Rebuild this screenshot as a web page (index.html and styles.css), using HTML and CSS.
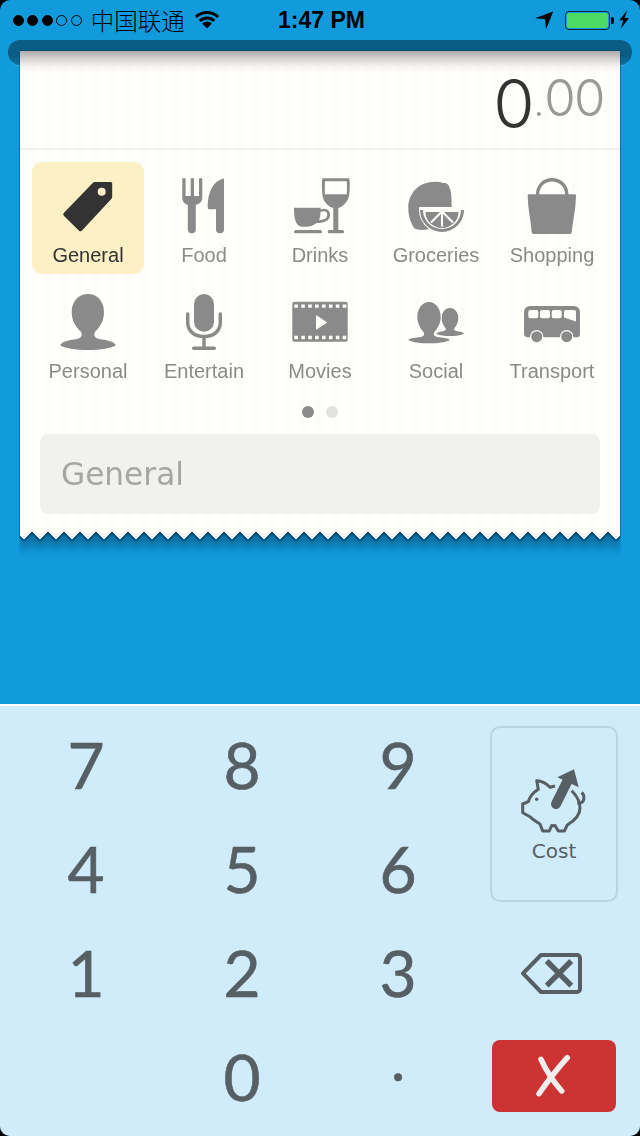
FILE: index.html
```html
<!DOCTYPE html>
<html lang="en">
<head>
<meta charset="utf-8">
<title>Expense entry</title>
<link rel="stylesheet" href="styles.css">
</head>
<body>
<div class="screen">
  <header class="status">
    <div class="signal"><i class="on"></i><i class="on"></i><i class="on"></i><i></i><i></i></div>
    <span class="carrier">中国联通</span>
    <svg class="wifi" viewBox="0 0 24 17.5"><path class="arc" d="M.9 6A16 16 0 0 1 23.100 6M4.700 9.950a10.500 10.500 0 0 1 14.600 0"/><path d="M12 17.500 7.200 12.500a7 7 0 0 1 9.600 0z"/></svg>
    <span class="time">1:47 PM</span>
    <svg class="loc" viewBox="0 0 18.300 18.300"><path d="M18.300.300 0 7.300l10 .7 1 10.300z"/></svg>
    <div class="battery"><div class="level"></div></div><div class="nub"></div>
    <svg class="bolt" viewBox="0 0 10.300 19.300"><path d="M8.300.300.300 10.300h4L1.600 19 10 8H5.600z"/></svg>
  </header>
  <div class="slot"></div>
  <div class="receipt-shadow">
    <main class="receipt">
      <div class="amount"><span class="int">0</span><span class="dot">.</span><span class="dec">00</span></div>
      <div class="cats">
        <div class="cat active">
          <svg viewBox="52 176 72 58"><path class="dark" d="M95 182h15.700a1.500 1.500 0 0 1 1.500 1.500V197a3 3 0 0 1-.9 2L82 230.500a2.200 2.200 0 0 1-3.200 0L64 216a2.200 2.200 0 0 1 0-3.200L92.500 183.200a3.500 3.500 0 0 1 2.500-1.200z"/><circle class="hole-yellow" cx="101.700" cy="191.700" r="4"/></svg>
          <span>General</span>
        </div>
        <div class="cat">
          <svg viewBox="168 176 72 58"><path d="M182.300 178.300h3.300V196h5.100v-17.700h3.300V196h5v-17.700h3.300V198q0 5-6.500 7v24.300a4 4 0 0 1-8 0V205q-5.500-2-5.500-7z"/><path d="M224 178.300v51a4 4 0 0 1-8 0v-20h-7q-1.300 0-1.300-2.300c0-15 5.300-26 16.300-28.700z"/></svg>
          <span>Food</span>
        </div>
        <div class="cat">
          <svg viewBox="284 176 72 58"><path fill-rule="evenodd" d="M294 207.700h26.700v1.900c6.300-2.600 9.300 1.400 9.300 5.400 0 5.500-5 8-13.500 8-3.500 3-6.500 3.700-10.500 3.700h-3c-7 0-9-6.700-9-19zm26.500 4.300c-.1 3-.5 6-1.500 8.300 5-.3 8.300-2.300 8.300-5.300 0-2-1.300-5-6.800-3z"/><path d="M295.700 230h24.600a1.650 1.650 0 0 1 0 3.300h-24.600a1.650 1.650 0 0 1 0-3.300z"/><path fill-rule="evenodd" d="M323.300 178.300h25q1 0 1.200 1c.5 4.700.5 10.700-.5 16.700-1.500 7-7 11-10.700 12v22h4.200a1.650 1.650 0 0 1 0 3.300h-13.100a1.650 1.650 0 0 1 0-3.300h3.900v-22c-4.300-1-9.500-5-10.700-12-.9-6-.7-12-.5-16.700q.2-1 1.200-1zm1.700 3c-.3 4.700-.2 8.700 0 13h21.700c.3-4.300.3-8.300.1-13z"/></svg>
          <span>Drinks</span>
        </div>
        <div class="cat">
          <svg viewBox="400 176 72 58"><path d="M435 181.700c3 0 6 .3 8.500 1.300 2.500-.5 5.500 1 5.800 4.500 1.700 2.500 2.400 8.500 2.400 19.500H419a25 25 0 0 0 10 22c-5 1.500-12 1-14.500-.5-4.500-6.500-6.200-13.500-6.200-20.500 0-15 10.700-26.300 26.700-26.300z"/><path d="M420 210h44a22 22 0 0 1-44 0z"/><path class="hole" d="M423 210h38a19 19 0 0 1-38 0z"/><path d="M425.500 212h33a16.500 16 0 0 1-33 0z"/><path class="spoke" d="M442 211.500v15M442 211.500l-11 11M442 211.500l11 11"/></svg>
          <span>Groceries</span>
        </div>
        <div class="cat">
          <svg viewBox="516 176 72 58"><path d="M529 194.300h45.700q1.300 0 1.300 1.300c0 12.400-3 24.400-4.300 36.400q0 2-2 2h-36q-2 0-2-2c-1-12-4-24-4-36.400q0-1.300 1.300-1.300z"/><path class="line" d="M537.500 195c0-9.500 6.500-15.200 14.500-15.200s14.800 5.700 14.800 15.200"/></svg>
          <span>Shopping</span>
        </div>
        <div class="cat">
          <svg viewBox="52 292 72 58"><path d="M88 294c10 0 16 8 16 18 0 9-4 15-9 20-2 3 0 6 4 7 7 1 14 2 17 6-4 3.500-16 5-28 5s-24-1.500-28-5c3-4 10-5 17-6 4-1 6-4 4-7-5-5-9.300-11-9.300-20 0-10 6.300-18 16.300-18z"/></svg>
          <span>Personal</span>
        </div>
        <div class="cat">
          <svg viewBox="168 292 72 58"><rect x="194" y="294" width="20" height="37.700" rx="10"/><path class="line" d="M187.700 314v8c0 9 6.300 14.500 16.300 14.500s16.300-5.500 16.300-14.500v-8"/><rect x="202.300" y="336" width="3.400" height="11"/><rect x="192" y="346.500" width="24" height="3.500" rx="1.750"/></svg>
          <span>Entertain</span>
        </div>
        <div class="cat">
          <svg viewBox="284 292 72 58"><path fill-rule="evenodd" d="M294.300 301.700h51.400a2 2 0 0 1 2 2v36a2 2 0 0 1-2 2h-51.400a2 2 0 0 1-2-2v-36a2 2 0 0 1 2-2zm0 2.700v3.400h3.600v-3.400zm7 0v3.400h3.600v-3.400zm6.900 0v3.400h3.600v-3.400zm6.900 0v3.400h3.600v-3.400zm6.900 0v3.400h3.600v-3.400zm6.900 0v3.400h3.600v-3.400zm6.900 0v3.400h3.600v-3.400zm6.900 0v3.400h3.600v-3.400zm-48.400 31.400v3.400h3.600v-3.400zm7 0v3.400h3.600v-3.400zm6.900 0v3.400h3.600v-3.400zm6.900 0v3.400h3.600v-3.400zm6.900 0v3.400h3.600v-3.400zm6.900 0v3.400h3.600v-3.400zm6.900 0v3.400h3.600v-3.400zm6.900 0v3.400h3.600v-3.400zM316 315v15l11.300-7.500z"/></svg>
          <span>Movies</span>
        </div>
        <div class="cat">
          <svg viewBox="400 292 72 58"><path d="M450 308c5 0 8.300 4.500 8.300 10 0 5-2.300 8-3.800 10-1 2 .5 2.800 2.500 3.200 3 .4 6 .8 7 2.300-3 2-9 2.500-14 2.500s-11-.5-14-2.500c2-1.500 5-1.900 7-2.300 2-.4 3.500-1.200 2.500-3.200-1.500-2-3.800-5-3.800-10 0-5.500 3.300-10 8.300-10z"/><path class="cutout" d="M429 302c7 0 11.700 7 11.700 15 0 7-3.700 12-6.200 15-1.500 2.500-.5 4 2.500 5 5 .5 11 1 13 3-4 2.500-13 3.300-21 3.300s-17-.8-20.700-3.300c2.200-2 7.700-2.500 12.700-3 3-1 4-2.500 2.500-5-2.500-3-6.200-8-6.200-15 0-8 4.700-15 11.700-15z"/></svg>
          <span>Social</span>
        </div>
        <div class="cat">
          <svg viewBox="516 292 72 58"><path fill-rule="evenodd" d="M530 306h44a6 6 0 0 1 6 6v22.300a3 3 0 0 1-3 3h-49a4 4 0 0 1-4-4V312a6 6 0 0 1 6-6zm.300 4a2 2 0 0 0-2 2v4.300a2 2 0 0 0 2 2h6a2 2 0 0 0 2-2V312a2 2 0 0 0-2-2zm11.700 0a2 2 0 0 0-2 2v4.300a2 2 0 0 0 2 2h6a2 2 0 0 0 2-2V312a2 2 0 0 0-2-2zm11.700 0a2 2 0 0 0-2 2v4.300a2 2 0 0 0 2 2h6a2 2 0 0 0 2-2V312a2 2 0 0 0-2-2zm12.300 0a2 2 0 0 0-2 2v5.500l12 4V312a2 2 0 0 0-2-2z"/><circle class="wheel" cx="536.700" cy="336.700" r="5.500"/><circle class="wheel" cx="566.700" cy="336.700" r="5.500"/></svg>
          <span>Transport</span>
        </div>
      </div>
      <div class="pager"><i class="current"></i><i></i></div>
      <div class="note">General</div>
    </main>
  </div>
  <section class="keypad">
    <button class="key">7</button>
    <button class="key">8</button>
    <button class="key">9</button>
    <div class="cost-cell">
      <button class="cost">
        <svg viewBox="520 766 68 68">
          <path class="pig" d="M555 786 550 787.300C547 784 542 781 536.700 780.700L538.300 789.300C534 792 530 796 528.300 801.700L522.700 804V812.700L530 816.700C533 820 537 822 540 824L542.700 831H549.300L551.700 825.500C553.500 825.800 554 825.800 555 825.500L558.300 831H564.300L567.300 825C574 821 580 816 580 808 580 801 576 795 571.700 790.700"/>
          <path class="pig" d="M577.300 803.300c3.500 0 6-1 6.500-4 .5-3-.5-5.500-2.100-7"/>
          <circle class="ink" cx="536.700" cy="799.300" r="1.700"/>
          <path class="ink" d="M574 769.300l4.700 18-21.400-10z"/>
          <path class="shaft" d="M567 782l-11 22"/>
        </svg>
        <span>Cost</span>
      </button>
    </div>
    <button class="key">4</button>
    <button class="key">5</button>
    <button class="key">6</button>
    <button class="key">1</button>
    <button class="key">2</button>
    <button class="key">3</button>
    <button class="key icon-key" aria-label="Backspace">
      <svg viewBox="519 948 70 48">
        <path class="pig wide" d="M541 954h36a3 3 0 0 1 3 3v31a3 3 0 0 1-3 3h-36l-18-18.700z"/>
        <path class="cross" d="M546.700 960l24.600 24.600M571.300 960l-24.600 24.600"/>
      </svg>
    </button>
    <span></span>
    <button class="key">0</button>
    <button class="key small-dot">.</button>
    <div class="clear-cell">
      <button class="clear" aria-label="Delete">
        <svg viewBox="534 1052 40 46"><path class="clear-x" d="M541 1058.300c5 11 13 23 20.700 31.700M567.300 1056.700c-9 10-20 24-28.300 36"/></svg>
      </button>
    </div>
  </section>
</div>
</body>
</html>
```
FILE: styles.css
```css
* { box-sizing: border-box; }
html, body { margin: 0; padding: 0; background: #000; }
.screen {
  width: 640px;
  height: 1136px;
  background: #119bdd;
  display: flex;
  flex-direction: column;
  overflow: hidden;
  border-radius: 10px;
  font-family: "Liberation Sans", Arial, sans-serif;
}
.status {
  height: 40px;
  flex: none;
  display: flex;
  align-items: center;
  padding: 0 0 0 13px;
  color: #000;
}
.signal { display: flex; gap: 3.4px; width: 68px; flex: none; }
.signal i { width: 11px; height: 11px; border-radius: 50%; border: 1px solid #000; flex: none; }
.signal i.on { background: #000; }
.carrier {
  font-family: "Noto Sans CJK SC", sans-serif;
  font-size: 23.5px;
  font-weight: 300;
  line-height: 40px;
  margin-left: 9.7px;
  width: 94px;
  white-space: nowrap;
}
.wifi { width: 24px; height: 17.5px; margin-left: 10.3px; flex: none; }
.wifi .arc { fill: none; stroke: #000; stroke-width: 3; }
.time {
  font-size: 23px;
  font-weight: 700;
  line-height: 42px;
  margin-left: 59px;
  width: 87px;
  white-space: nowrap;
}
.loc { width: 18.3px; height: 18.3px; margin-left: 170px; flex: none; }
.battery {
  width: 45px;
  height: 19px;
  margin-left: 11.7px;
  border: 1px solid #0a2a3c;
  border-radius: 4px;
  padding: 1px;
  flex: none;
}
.level { height: 100%; background: #4cd964; border-radius: 2px; }
.nub { width: 3px; height: 7px; margin-left: 1px; background: #000; border-radius: 0 2px 2px 0; flex: none; }
.bolt { width: 10.3px; height: 19.3px; margin-left: 5px; flex: none; }

.slot {
  flex: none;
  height: 25px;
  margin: 0 8px;
  background: linear-gradient(#0a5d85 60%, #0c6fa0);
  border-radius: 12px;
  box-shadow: 0 1px 0 rgba(120, 200, 240, .35);
}
.receipt-shadow {
  flex: none;
  margin: -15px 20px 0;
  clip-path: inset(0 -1px -30px -1px);
  filter: drop-shadow(0 2px 1px rgba(5, 50, 80, .7)) drop-shadow(0 10px 4px rgba(5, 60, 95, .45));
}
.receipt {
  height: 490px;
  display: flex;
  flex-direction: column;
  background:
    linear-gradient(#084a6c, #084a6c) 0 0 / 100% 1px no-repeat,
    linear-gradient(#adaba7, #d6d5d1 8px, #f3f2ef 15px, rgba(255, 255, 255, 0) 21px) 0 1px / 100% 22px no-repeat,
    repeating-linear-gradient(90deg, #fffffc 0 8px, #fdfcf9 8px 16px);
  -webkit-mask: conic-gradient(from -45deg at bottom, transparent, #000 .5deg 89.5deg, transparent 90deg) -4px 0 / 16px 100%;
  mask: conic-gradient(from -45deg at bottom, transparent, #000 .5deg 89.5deg, transparent 90deg) -4px 0 / 16px 100%;
}
.amount {
  height: 100px;
  flex: none;
  padding-right: 16px;
  text-align: right;
  border-bottom: 2px solid #efefed;
  font-family: Inter, sans-serif;
  font-weight: 300;
  line-height: 96px;
  white-space: nowrap;
}
.int { font-size: 67px; color: #333; }
.dot { font-size: 30px; color: #999; font-weight: 400; vertical-align: 12px; }
.dec { font-size: 51px; color: #999; letter-spacing: -1.6px; margin-left: 1px; vertical-align: 12px; }

.cats {
  flex: none;
  display: grid;
  grid-template-columns: repeat(5, 112px);
  grid-auto-rows: 112px;
  gap: 4px;
  padding: 12px 0 0 12px;
}
.cat {
  display: flex;
  flex-direction: column;
  align-items: center;
  padding-top: 14px;
  border-radius: 10px;
  color: #8a8a8a;
  font-size: 20px;
  line-height: 24px;
}
.cat svg { width: 72px; height: 58px; fill: #8a8a8a; flex: none; margin-bottom: 9px; }
.cat.active { background: #fbf0c6; color: #333; }
.cat .dark { fill: #333; }
.cat .hole-yellow { fill: #fbeec2; }
.cat .hole { fill: #fdfdfa; }
.cat .spoke { fill: none; stroke: #fdfdfa; stroke-width: 2; }
.cat .line { fill: none; stroke: #8a8a8a; stroke-width: 3.4; stroke-linecap: round; }
.cat .cutout { stroke: #fdfdfa; stroke-width: 1.5; paint-order: stroke; }
.cat .wheel { stroke: #fdfdfa; stroke-width: 2.5; paint-order: stroke; }

.pager { display: flex; justify-content: center; gap: 12px; margin-top: 16px; flex: none; }
.pager i { width: 12px; height: 12px; border-radius: 50%; background: #e2e2e0; }
.pager i.current { background: #8a8a8a; }
.note {
  flex: none;
  margin: 16px 20px 0;
  height: 80px;
  border-radius: 8px;
  background: #f1f1ef;
  color: #a6a6a4;
  font-family: "DejaVu Sans", sans-serif;
  font-size: 31.2px;
  line-height: 80px;
  padding-left: 21px;
}

.keypad {
  margin-top: auto;
  flex: none;
  height: 432px;
  background: #d0ebf9;
  border-top: 2px solid #fff;
  display: grid;
  grid-template-columns: repeat(4, 156px);
  grid-template-rows: repeat(4, 104px);
  padding: 7px 8px 8px;
}
.key {
  appearance: none;
  border: 0;
  background: none;
  padding: 0;
  font-family: Lato, sans-serif;
  font-size: 64px;
  line-height: 1;
  color: #555f64;
  -webkit-text-stroke: .6px #555f64;
}
.cost-cell { grid-row: span 2; display: flex; justify-content: center; align-items: center; padding-bottom: 6px; }
.cost {
  appearance: none;
  width: 128px;
  height: 176px;
  background: none;
  border: 2px solid #b8d5e3;
  border-radius: 10px;
  display: flex;
  flex-direction: column;
  align-items: center;
  gap: 5px;
  padding: 38px 0 0;
  font-family: "DejaVu Sans", sans-serif;
  font-size: 20px;
  line-height: 24px;
  color: #555f64;
}
.cost svg { width: 68px; height: 68px; flex: none; }
.pig { fill: none; stroke: #555f64; stroke-width: 3; stroke-linejoin: round; }
.pig.wide { stroke-width: 4; }
.ink { fill: #555f64; }
.shaft { fill: none; stroke: #555f64; stroke-width: 10; stroke-linecap: round; }
.cross { fill: none; stroke: #555f64; stroke-width: 5.5; }
.icon-key svg { width: 70px; height: 48px; display: block; margin: 0 auto; }
.small-dot { font-size: 60px; padding-bottom: 38px; }
.clear-cell { display: flex; justify-content: center; align-items: center; padding-bottom: 2px; }
.clear {
  appearance: none;
  border: 0;
  width: 124px;
  height: 72px;
  background: #cd3333;
  border-radius: 8px;
  padding: 0;
  display: flex;
  align-items: center;
  justify-content: center;
}
.clear svg { width: 40px; height: 46px; }
.clear-x { fill: none; stroke: #f1efee; stroke-width: 5.5; stroke-linecap: round; }
```
